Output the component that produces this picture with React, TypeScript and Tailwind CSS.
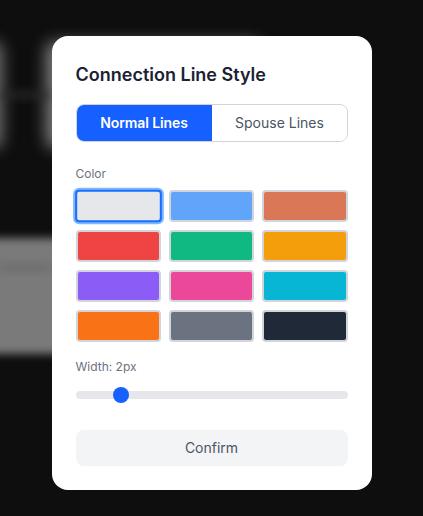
const swatches = [
	'bg-[#e5e7eb]', 'bg-[#60a5fa]', 'bg-[#d97757]',
	'bg-[#ef4444]', 'bg-[#10b981]', 'bg-[#f59e0b]',
	'bg-[#8b5cf6]', 'bg-[#ec4899]', 'bg-[#06b6d4]',
	'bg-[#f97316]', 'bg-[#6b7280]', 'bg-[#1f2937]',
];

const Backdrop = () => (
	<div className="absolute inset-0 overflow-hidden bg-[#0e0e0e]">
		<div className="absolute left-[-60px] top-[42px] h-[106px] w-[62px] rounded-lg bg-[#777777] blur-[8px]" />
		<div className="absolute left-[46px] top-[42px] h-[106px] w-[214px] rounded-lg bg-[#808080] blur-[8px]" />
		<div className="absolute left-0 top-[92px] h-[6px] w-[50px] bg-[#2a2a2a] blur-[5px]" />
		<div className="absolute left-[-12px] top-[238px] h-[116px] w-[270px] bg-[#7a7a7a] blur-[4px]" />
		<div className="absolute left-0 top-[265px] h-[5px] w-[50px] bg-[#666666] blur-[4px]" />
	</div>
);

export default function App() {
	return (
		<div className="relative h-[516px] w-[423px] overflow-hidden font-['Inter',sans-serif]">
			<Backdrop />
			<div className="relative flex h-full items-start justify-center pt-[36px]">
				<div className="flex h-[454px] w-[320px] flex-col rounded-2xl bg-white px-6 pt-[25px]">
					<h2 className="text-lg leading-7 font-semibold text-[#1a2233]">Connection Line Style</h2>
					<div className="mt-[15px] flex h-[38px] overflow-hidden rounded-lg border border-[#d1d5db]">
						<button className="flex-1 bg-[#1660ff] text-sm font-semibold tracking-[-0.1px] text-white">Normal Lines</button>
						<button className="flex-1 bg-white text-sm font-normal text-[#4b5563]">
							<span className="pl-px">Spouse Lines</span>
						</button>
					</div>
					<div className="mt-6 text-xs leading-4 font-normal text-[#6b7280]">Color</div>
					<div className="mt-2 grid grid-cols-3 gap-2">
						{swatches.map((c, i) => (
							<button
								key={c}
								className={`h-8 rounded border-2 ${c} ${i === 0 ? 'scale-[1.02] border-[#1a6dff] shadow-[0_0_0_2px_#7db8ff]' : 'border-[#d1d5db]'}`}
							/>
						))}
					</div>
					<div className="mt-[17px] text-xs leading-4 font-normal text-[#6b7280]">Width: 2px</div>
					<div className="relative mt-4 h-2 rounded-full bg-[#e5e7eb]">
						<div className="absolute left-[37px] top-[-4px] size-4 rounded-full bg-[#1660ff]" />
					</div>
					<button className="mt-[31px] h-9 rounded-lg bg-[#f3f4f6] text-sm font-normal text-[#4b5563]">Confirm</button>
				</div>
			</div>
		</div>
	);
}
